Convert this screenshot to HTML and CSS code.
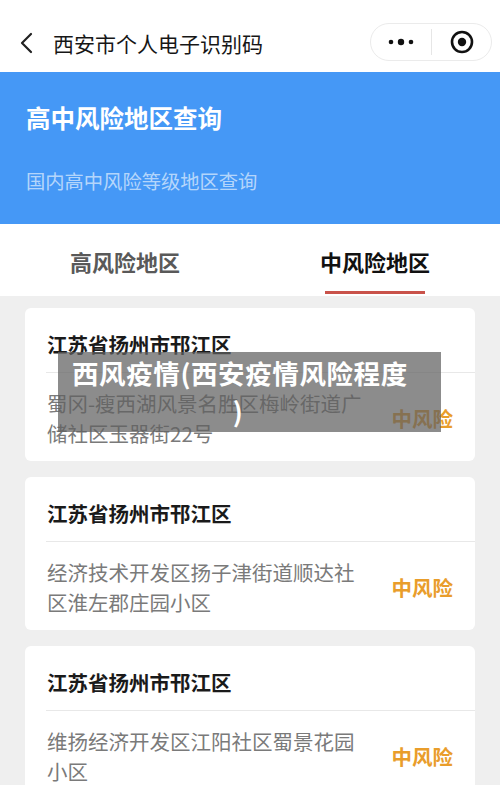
FILE: index.html
```html
<!DOCTYPE html>
<html lang="zh-CN">
<head>
  <meta charset="UTF-8">
  <meta name="viewport" content="width=device-width, initial-scale=1.0">
  <title>西安市个人电子识别码</title>
  <link rel="stylesheet" href="styles.css">
</head>
<body>

  <div class="nav">
    <svg class="back" width="16" height="22" viewBox="0 0 16 22">
      <path d="M12 2 L3 11 L12 20" fill="none" stroke="#222" stroke-width="2.2" stroke-linecap="round" stroke-linejoin="round"/>
    </svg>
    <div class="nav-title">西安市个人电子识别码</div>
    <div class="capsule">
      <svg class="more" width="30" height="10" viewBox="0 0 30 10">
        <circle cx="5" cy="5" r="2.3" fill="#111"/>
        <circle cx="15" cy="5" r="3.2" fill="#111"/>
        <circle cx="25" cy="5" r="2.3" fill="#111"/>
      </svg>
      <span class="capsule-line"></span>
      <svg class="target" width="26" height="26" viewBox="0 0 26 26">
        <circle cx="13" cy="13" r="10" fill="none" stroke="#111" stroke-width="2.6"/>
        <circle cx="13" cy="13" r="4.2" fill="#111"/>
      </svg>
    </div>
  </div>

  <div class="hero">
    <h1>高中风险地区查询</h1>
    <p>国内高中风险等级地区查询</p>
  </div>

  <div class="tabs">
    <div class="tab">高风险地区</div>
    <div class="tab active">中风险地区</div>
  </div>

  <div class="list">
    <div class="card">
      <div class="card-head">江苏省扬州市邗江区</div>
      <div class="card-body">
        <div class="addr">蜀冈-瘦西湖风景名胜区梅岭街道广储社区玉器街22号</div>
        <div class="level">中风险</div>
      </div>
    </div>
    <div class="card">
      <div class="card-head">江苏省扬州市邗江区</div>
      <div class="card-body">
        <div class="addr">经济技术开发区扬子津街道顺达社区淮左郡庄园小区</div>
        <div class="level">中风险</div>
      </div>
    </div>
    <div class="card">
      <div class="card-head">江苏省扬州市邗江区</div>
      <div class="card-body">
        <div class="addr">维扬经济开发区江阳社区蜀景花园小区</div>
        <div class="level">中风险</div>
      </div>
    </div>
  </div>

  <div class="caption">西风疫情(西安疫情风险程度<br>)</div>

</body>
</html>
```

FILE: styles.css
```css
body {
  margin: 0;
  font-family: 'Noto Sans CJK SC', 'Noto Sans', sans-serif;
  background-color: #efefef;
  color: #1a1a1a;
  position: relative;
  height: 785px;
  overflow: hidden;
}

.nav {
  display: flex;
  align-items: center;
  height: 58px;
  padding: 14px 8px 0 19px;
  background-color: #fff;
}

.back {
  display: block;
  margin-right: 18px;
}

.nav-title {
  flex: 1;
  font-size: 21px;
  color: #161616;
}

.capsule {
  display: flex;
  align-items: center;
  width: 122px;
  height: 38px;
  box-sizing: border-box;
  border: 1px solid #ebebeb;
  border-radius: 19px;
  margin-top: -2px;
}

.more {
  margin-left: 15px;
}

.capsule-line {
  width: 1px;
  height: 26px;
  background-color: #e6e6e6;
  margin: 0 17px 0 15px;
}

.hero {
  height: 152px;
  box-sizing: border-box;
  padding: 30px 26px 0;
  background-color: #4598f6;
  color: #fff;
}

.hero h1 {
  margin: 0;
  font-size: 24.5px;
  line-height: 32px;
  font-weight: 700;
}

.hero p {
  margin: 33px 0 0;
  font-size: 19.3px;
  line-height: 28px;
  color: rgba(255, 255, 255, 0.62);
}

.tabs {
  display: flex;
  height: 72px;
  background-color: #fff;
}

.tab {
  flex: 1;
  text-align: center;
  font-size: 22px;
  font-weight: 700;
  line-height: 30px;
  padding-top: 22px;
  color: #595959;
}

.tab.active {
  color: #111;
}

.tab.active::after {
  content: "";
  display: block;
  width: 100px;
  height: 3px;
  margin: 15px auto 0;
  background-color: #c9524a;
}

.list {
  display: flex;
  flex-direction: column;
  gap: 16px;
  padding: 12px 25px;
}

.card {
  background-color: #fff;
  border-radius: 6px;
}

.card-head {
  margin-left: 21px;
  padding: 22px 0 14px 1px;
  font-size: 20.5px;
  line-height: 28px;
  font-weight: 700;
  border-bottom: 1px solid #e8e8e8;
}

.card-body {
  display: flex;
  align-items: center;
  padding: 15px 22px 13px;
}

.addr {
  width: 318px;
  font-size: 20.5px;
  line-height: 30px;
  color: #7a7a7a;
}

.level {
  margin-left: auto;
  font-size: 20.5px;
  font-weight: 700;
  color: #e99d2b;
}

.caption {
  position: absolute;
  left: 58px;
  top: 352px;
  width: 383px;
  height: 80px;
  box-sizing: border-box;
  padding: 2px 37px 0 14px;
  background-color: rgba(95, 95, 95, 0.72);
  color: #fff;
  font-size: 26.5px;
  font-weight: 700;
  letter-spacing: 0.6px;
  line-height: 38px;
  text-align: center;
  white-space: nowrap;
}
```
